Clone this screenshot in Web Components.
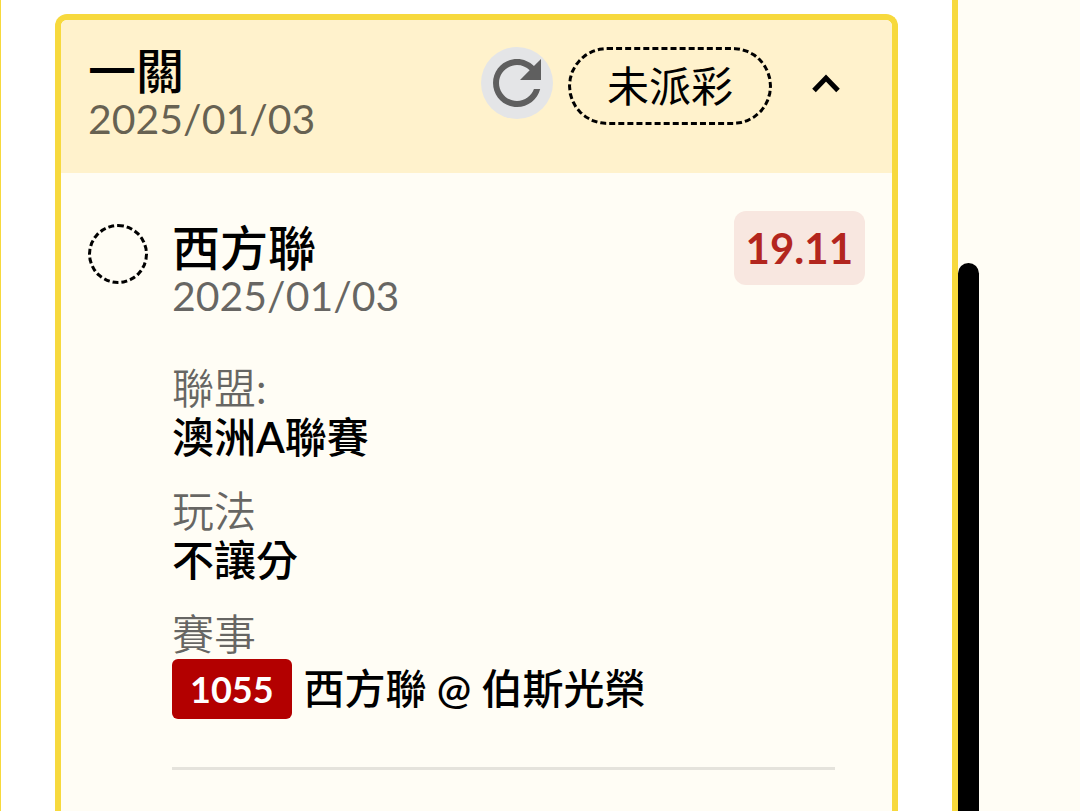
<!DOCTYPE html>
<html lang="zh-Hant">
<head>
<meta charset="utf-8">
<meta name="viewport" content="width=device-width, initial-scale=1">
<title>投注紀錄</title>
<style>
  body {
    margin: 0;
    background: #fffdf5;
    color: #000;
    font-family: Lato, "Noto Sans CJK TC", sans-serif;
  }
</style>
</head>
<body>
<bet-history>
  <bet-card>
    <bet-heading slot="heading">一關<span slot="date">2025/01/03</span></bet-heading>
    <span slot="status">未派彩</span>
    <bet-selection>
      <bet-heading slot="heading">西方聯<span slot="date">2025/01/03</span></bet-heading>
      <span slot="odds">19.11</span>
      <bet-field label="聯盟:">澳洲A聯賽</bet-field>
      <bet-field label="玩法">不讓分</bet-field>
      <bet-field label="賽事"><match-tag slot="match" number="1055">西方聯 @ 伯斯光榮</match-tag></bet-field>
    </bet-selection>
  </bet-card>
</bet-history>

<script>
function define(name, html, connected) {
  const template = document.createElement('template');
  template.innerHTML = html;
  customElements.define(name, class extends HTMLElement {
    connectedCallback() {
      if (this.shadowRoot) {
        return;
      }
      this.attachShadow({mode: 'open'});
      this.shadowRoot.appendChild(template.content.cloneNode(true));
      if (connected) {
        connected(this, this.shadowRoot);
      }
    }
  });
}

define('bet-history', `
  <style>
    :host {
      display: flex;
      height: 100vh;
      overflow: hidden;
      --line: #f7d93d;
    }
    main {
      flex: 1;
      display: flex;
      flex-direction: column;
      padding: 14px 54px 0;
      background: #fff;
      border-left: 1px solid var(--line);
      border-right: 6px solid var(--line);
    }
    .track {
      width: 122px;
      display: flex;
    }
    .thumb {
      width: 21px;
      margin-top: 263px;
      background: #000;
      border-radius: 11px 11px 0 0;
    }
  </style>
  <main><slot></slot></main>
  <div class="track"><div class="thumb"></div></div>
`);

define('bet-card', `
  <style>
    :host {
      flex: 1;
      display: block;
      background: #fffdf5;
      border: 6px solid var(--line);
      border-bottom: 0;
      border-radius: 12px 12px 0 0;
    }
    header {
      display: flex;
      align-items: flex-start;
      gap: 15px;
      padding: 27px 27px 30px;
      background: #fff2cc;
      border-radius: 6px 6px 0 0;
    }
    ::slotted([slot="heading"]) {
      flex: 1;
    }
    button {
      display: flex;
      align-items: center;
      justify-content: center;
      height: 72px;
      padding: 0;
      border: 0;
      background: none;
      cursor: pointer;
    }
    .refresh {
      width: 72px;
      border-radius: 50%;
      background: #e4e5e7;
    }
    .toggle {
      width: 78px;
    }
    .status {
      box-sizing: border-box;
      padding: 0 36px;
      border: 3px dashed #000;
      border-radius: 39px;
      font-size: 42px;
      line-height: 72px;
    }
    .closed svg {
      transform: rotate(180deg);
    }
  </style>
  <header>
    <slot name="heading"></slot>
    <button class="refresh" type="button" aria-label="重新整理">
      <svg width="72" height="72" viewBox="0 0 24 24" fill="#5f5f5f">
        <path d="M17.65 6.35C16.2 4.9 14.21 4 12 4c-4.42 0-7.99 3.58-7.99 8s3.57 8 7.99 8c3.73 0 6.84-2.55 7.73-6h-2.08c-.82 2.33-3.04 4-5.65 4-3.31 0-6-2.69-6-6s2.69-6 6-6c1.66 0 3.14.69 4.22 1.78L13 11h7V4l-2.35 2.35z"/>
      </svg>
    </button>
    <div class="status"><slot name="status"></slot></div>
    <button class="toggle" type="button" aria-label="收合" aria-expanded="true">
      <svg width="28" height="20" viewBox="0 0 28 20" fill="none" stroke="#000" stroke-width="5">
        <path d="M2 17.5 14 5l12 12.5"/>
      </svg>
    </button>
  </header>
  <section><slot></slot></section>
`, (host, root) => {
  const toggle = root.querySelector('.toggle');
  const section = root.querySelector('section');
  toggle.addEventListener('click', () => {
    section.hidden = !section.hidden;
    toggle.classList.toggle('closed', section.hidden);
    toggle.setAttribute('aria-expanded', String(!section.hidden));
  });
});

define('bet-heading', `
  <style>
    :host {
      display: block;
      font-size: 41px;
      line-height: 48px;
      white-space: nowrap;
    }
    .title {
      font-size: 48px;
      font-weight: 500;
    }
    .date {
      color: rgba(0, 0, 0, .6);
    }
  </style>
  <div class="title"><slot></slot></div>
  <div class="date"><slot name="date"></slot></div>
`);

define('bet-selection', `
  <style>
    :host {
      display: flex;
      align-items: flex-start;
      gap: 24px;
      padding: 38px 27px;
    }
    .marker {
      box-sizing: border-box;
      width: 60px;
      height: 60px;
      margin-top: 13px;
      border: 3px dashed #000;
      border-radius: 50%;
    }
    .detail {
      flex: 1;
    }
    .top {
      display: flex;
      justify-content: space-between;
      align-items: flex-start;
    }
    ::slotted([slot="heading"]) {
      margin-top: 13px;
    }
    .odds {
      padding: 0 12px;
      border-radius: 12px;
      background: #f8e7e0;
      color: #b3261e;
      font-size: 42px;
      font-weight: 700;
      line-height: 74px;
    }
    .fields {
      display: flex;
      flex-direction: column;
      gap: 25px;
      margin: 44px 30px 0 0;
      padding-bottom: 48px;
      border-bottom: 3px solid #e5e3dc;
    }
  </style>
  <div class="marker"></div>
  <div class="detail">
    <div class="top">
      <slot name="heading"></slot>
      <div class="odds"><slot name="odds"></slot></div>
    </div>
    <div class="fields"><slot></slot></div>
  </div>
`);

define('bet-field', `
  <style>
    :host {
      display: block;
      font-size: 42px;
      line-height: 49px;
    }
    .label {
      color: rgba(0, 0, 0, .6);
      font-family: Lato, "Noto Sans CJK TC DemiLight", "Noto Sans CJK TC", sans-serif;
    }
    .value {
      font-family: "Lato Semibold", Lato, "Noto Sans CJK TC", sans-serif;
      font-weight: 500;
    }
  </style>
  <div class="label"></div>
  <div class="value"><slot></slot></div>
  <slot name="match"></slot>
`, (host, root) => {
  root.querySelector('.label').textContent = host.getAttribute('label');
});

define('match-tag', `
  <style>
    :host {
      display: flex;
      align-items: center;
      gap: 12px;
      font-size: 41px;
      line-height: 60px;
    }
    .number {
      padding: 0 18px;
      border-radius: 6px;
      background: #b30000;
      color: #fff;
      font-size: 36px;
      font-weight: 700;
    }
    .teams {
      font-family: "Lato Semibold", Lato, "Noto Sans CJK TC", sans-serif;
      font-weight: 500;
    }
  </style>
  <span class="number"></span>
  <span class="teams"><slot></slot></span>
`, (host, root) => {
  root.querySelector('.number').textContent = host.getAttribute('number');
});
</script>
</body>
</html>
